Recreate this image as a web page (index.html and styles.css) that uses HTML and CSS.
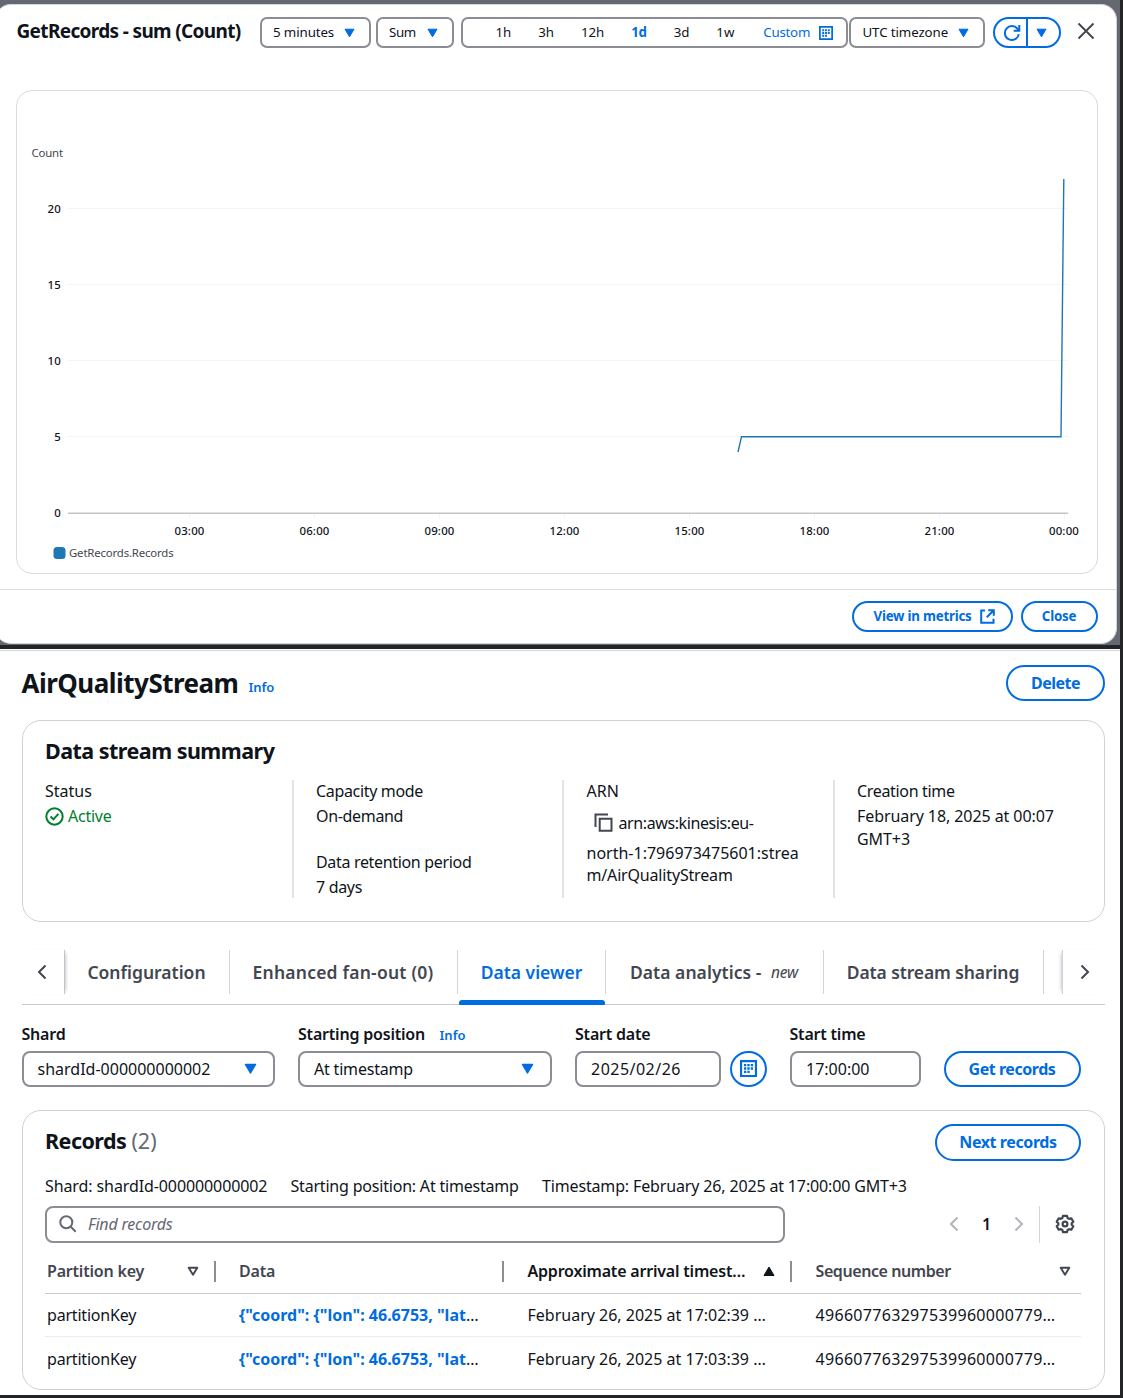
FILE: index.html
```html
<!DOCTYPE html>
<html lang="en">
<head>
<meta charset="utf-8">
<title>AirQualityStream</title>
<link rel="stylesheet" href="styles.css">
</head>
<body>
<svg class="defs" aria-hidden="true">
  <symbol id="caret" viewBox="0 0 11 10"><path d="M1 1.2h9L5.5 8.8z" fill="currentColor" stroke="currentColor" stroke-width="1" stroke-linejoin="round"/></symbol>
  <symbol id="calendar" viewBox="0 0 16 16"><path d="M1 1h14v14H1z" fill="none" stroke="currentColor" stroke-width="2"/><path d="M3.700 3.700h2.200v2.200H3.700zM6.900 3.700h2.200v2.200H6.900zM10.100 3.700h2.200v2.200h-2.200zM3.700 6.900h2.200v2.200H3.700zM6.900 6.900h2.200v2.200H6.900zM10.100 6.900h2.200v2.200h-2.200zM3.700 10.100h2.200v2.200H3.700zM6.900 10.100h2.200v2.200H6.900z" fill="currentColor"/></symbol>
  <symbol id="chevron-left" viewBox="0 0 16 16"><path d="M11.5 1.5 5 8l6.500 6.500" fill="none" stroke="currentColor" stroke-width="2"/></symbol>
  <symbol id="chevron-right" viewBox="0 0 16 16"><path d="M4.500 1.500 11 8l-6.500 6.500" fill="none" stroke="currentColor" stroke-width="2"/></symbol>
  <symbol id="sort" viewBox="0 0 12 11"><path d="M1.700 1.800h8.600L6 8.700z" fill="none" stroke="currentColor" stroke-width="1.900" stroke-linejoin="round"/></symbol>
</svg>

<section class="overlay">
  <div class="modal">
    <header class="modal-header">
      <h2 class="modal-title">GetRecords - sum (Count)</h2>
      <div class="select select-period"><span>5 minutes</span><svg class="caret"><use href="#caret"/></svg></div>
      <div class="select select-stat"><span class="tight">Sum</span><svg class="caret"><use href="#caret"/></svg></div>
      <div class="ranges">
        <span>1h</span><span>3h</span><span>12h</span><span class="range-on">1d</span><span>3d</span><span>1w</span>
        <span class="range-custom">Custom <svg class="range-cal"><use href="#calendar"/></svg></span>
      </div>
      <div class="select select-zone"><span>UTC timezone</span><svg class="caret"><use href="#caret"/></svg></div>
      <div class="split">
        <span class="split-main"><svg width="18" height="18" viewBox="0 0 18 18" fill="none" stroke="currentColor" stroke-width="2"><path d="M15.800 10.200A7 7 0 1 1 14.500 4.800l1.500 1.700"/><path d="M16.300 1v5.700h-5.600"/></svg></span>
        <span class="split-menu"><svg class="caret"><use href="#caret"/></svg></span>
      </div>
      <svg class="dismiss" width="18" height="18" viewBox="0 0 18 18"><path d="M1.500 1.500l15 15M16.500 1.500l-15 15" stroke="#424650" stroke-width="1.900"/></svg>
    </header>

    <div class="chart-card">
      <svg class="chart" width="1079" height="481" viewBox="17 91 1079 481">
        <text class="axis-title" x="31.500" y="157">Count</text>
        <g class="grid">
          <path d="M68 208.500H1068M68 284.500H1068M68 360.500H1068M68 436.500H1068"/>
          <path d="M189.500 514v5M314.500 514v5M439.500 514v5M564.500 514v5M689.500 514v5M814.500 514v5M939.500 514v5M1064.500 514v5"/>
        </g>
        <path class="axis" d="M68 513.200H1068"/>
        <g class="y-labels">
          <text x="61" y="213">20</text><text x="61" y="289">15</text><text x="61" y="365">10</text><text x="61" y="441">5</text><text x="61" y="517">0</text>
        </g>
        <g class="x-labels">
          <text x="189.500" y="535">03:00</text><text x="314.500" y="535">06:00</text><text x="439.500" y="535">09:00</text><text x="564.500" y="535">12:00</text><text x="689.500" y="535">15:00</text><text x="814.500" y="535">18:00</text><text x="939.500" y="535">21:00</text><text x="1064" y="535">00:00</text>
        </g>
        <path class="series" d="M738 452l3.500-15.300H1061L1063.800 179"/>
        <rect x="53.500" y="547" width="12" height="12" rx="3.500" fill="#1f77b4"/>
        <text class="legend" x="69" y="557">GetRecords.Records</text>
      </svg>
    </div>

    <footer class="modal-footer">
      <span class="button button-small button-metrics">View in metrics
        <svg width="15" height="15" viewBox="0 0 15 15" fill="none" stroke="currentColor" stroke-width="2"><path d="M5 1.500H1.200v12.300h12.300V9.800"/><path d="M8.200 1.200h5.600v5.500M13.500 1.500 6.800 8.200"/></svg>
      </span>
      <span class="button button-small button-close">Close</span>
    </footer>
  </div>
</section>

<main class="page">
  <header class="page-header">
    <h1>AirQualityStream</h1><span class="info">Info</span>
    <span class="button button-delete">Delete</span>
  </header>

  <section class="card summary">
    <h2>Data stream summary</h2>
    <div class="columns">
      <div class="column">
        <div class="label">Status</div>
        <div class="value status"><svg width="19" height="19" viewBox="0 0 19 19" fill="none" stroke="currentColor" stroke-width="2"><circle cx="9.500" cy="9.500" r="8.200"/><path d="M5.500 9.500l2.900 2.900 5-5.600"/></svg>Active</div>
      </div>
      <div class="column">
        <div class="label tight">Capacity mode</div>
        <div class="value tight">On-demand</div>
        <div class="label second tight">Data retention period</div>
        <div class="value tight">7 days</div>
      </div>
      <div class="column">
        <div class="label">ARN</div>
        <div class="value arn-first"><svg width="19" height="20" viewBox="0 0 19 20" fill="none" stroke="#424650" stroke-width="2"><path d="M1.500 14V1.500H14"/><path d="M5.700 5.700h11.800v12H5.700z"/></svg><span>arn:aws:kinesis:eu-</span></div>
        <div class="value">north-1:796973475601:strea<br><span class="arn-last">m/AirQualityStream</span></div>
      </div>
      <div class="column">
        <div class="label tight">Creation time</div>
        <div class="value created">February 18, 2025 at 00:07<br>GMT+3</div>
      </div>
    </div>
  </section>

  <nav class="tabs">
    <span class="tab-arrow tab-prev"><svg width="16" height="16"><use href="#chevron-left"/></svg></span>
    <span class="tab tab-config">Configuration</span>
    <span class="tab tab-fanout">Enhanced fan-out (0)</span>
    <span class="tab tab-viewer">Data viewer</span>
    <span class="tab tab-analytics">Data analytics -&nbsp; <i>new</i></span>
    <span class="tab tab-sharing">Data stream sharing</span>
    <span class="tab-arrow tab-next"><svg width="16" height="16"><use href="#chevron-right"/></svg></span>
  </nav>

  <section class="form">
    <div class="field field-shard"><div class="field-label">Shard</div>
      <div class="input"><span>shardId-000000000002</span><svg class="caret-large"><use href="#caret"/></svg></div></div>
    <div class="field field-position"><div class="field-label">Starting position<span class="info">Info</span></div>
      <div class="input"><span class="at">At timestamp</span><svg class="caret-large"><use href="#caret"/></svg></div></div>
    <div class="field field-date"><div class="field-label">Start date</div>
      <div class="input"><span class="digits">2025/02/26</span></div></div>
    <span class="cal-button"><svg width="17" height="17"><use href="#calendar"/></svg></span>
    <div class="field field-time"><div class="field-label">Start time</div>
      <div class="input"><span class="digits">17:00:00</span></div></div>
    <span class="button button-get">Get records</span>
  </section>

  <section class="card records">
    <header class="records-header">
      <h2>Records <span class="count">(2)</span></h2>
      <span class="button button-next">Next records</span>
    </header>
    <div class="meta"><span class="meta-shard">Shard: shardId-000000000002</span><span class="meta-position">Starting position: At timestamp</span><span class="meta-time">Timestamp: February 26, 2025 at 17:00:00 GMT+3</span></div>
    <div class="tools">
      <div class="search"><svg width="18" height="18" viewBox="0 0 18 18" fill="none" stroke="#656871" stroke-width="2"><circle cx="7.300" cy="7.300" r="6"/><path d="M11.500 11.500l5.200 5.200"/></svg><i>Find records</i></div>
      <div class="pager">
        <svg width="16" height="16"><use href="#chevron-left"/></svg><b>1</b><svg width="16" height="16"><use href="#chevron-right"/></svg>
      </div>
      <div class="settings"><svg width="20" height="20" viewBox="0 0 20 20" fill="none" stroke="#424650" stroke-width="2.200" stroke-linejoin="round"><path d="M8 1.800h4l.6 2.200 1.500.9 2.200-.6 2 3.400-1.600 1.600v1.400l1.600 1.600-2 3.400-2.200-.6-1.500.9-.6 2.200H8L7.400 16l-1.500-.9-2.200.6-2-3.400 1.600-1.600V9.300L1.700 7.700l2-3.400 2.200.6L7.400 4z"/><circle cx="10" cy="10" r="2.400"/></svg></div>
    </div>
    <div class="table">
      <div class="row head">
        <span class="cell th"><span>Partition key</span><svg class="sort"><use href="#sort"/></svg></span>
        <span class="cell th"><span>Data</span></span>
        <span class="cell th th-sorted"><span>Approximate arrival timest…</span><svg class="sort" viewBox="0 0 12 11"><path d="M1 9.500h10L6 1z" fill="currentColor" stroke="currentColor" stroke-linejoin="round"/></svg></span>
        <span class="cell th th-sequence"><span>Sequence number</span><svg class="sort"><use href="#sort"/></svg></span>
      </div>
      <div class="row">
        <span class="cell">partitionKey</span>
        <span class="cell"><b class="link">{"coord": {"lon": 46.6753, "lat</b>…</span>
        <span class="cell">February 26, 2025 at 17:02:39 …</span>
        <span class="cell digits-cell">496607763297539960000779…</span>
      </div>
      <div class="row">
        <span class="cell">partitionKey</span>
        <span class="cell"><b class="link">{"coord": {"lon": 46.6753, "lat</b>…</span>
        <span class="cell">February 26, 2025 at 17:03:39 …</span>
        <span class="cell digits-cell">496607763297539960000779…</span>
      </div>
    </div>
  </section>
</main>
</body>
</html>
```

FILE: styles.css
```css
* { box-sizing: border-box; }
body {
  margin: 0;
  width: 1123px;
  height: 1398px;
  overflow: hidden;
  padding-right: 3px;
  background: #232526;
  color: #0f141a;
  font: 16px/22.5px "Noto Sans", "Open Sans", sans-serif;
}
h1, h2 { margin: 0; font-weight: 700; white-space: nowrap; }
b { font-weight: 600; }
svg { display: block; flex: none; }
.defs { display: none; }
.tight { letter-spacing: -0.33px; }

/* Metric dialog */
.overlay { height: 645px; padding-top: 4px; background: #656871; overflow: hidden; }
.modal {
  height: 640px;
  margin: 0 3px 0 -5px;
  border: 1px solid #d4d5d9;
  border-width: 1px 1px 1px 0;
  border-radius: 16px;
  background: #fff;
  font-size: 13.3px;
}
.modal-header { display: flex; height: 43px; padding: 12px 0 0 21.500px; }
.modal-title { width: 243px; font-size: 19px; line-height: 29px; letter-spacing: -0.65px; }
.select {
  display: flex;
  align-items: center;
  justify-content: space-between;
  height: 31px;
  padding: 0 13px 0 11.500px;
  border: 2px solid #8c8c94;
  border-radius: 7px;
  letter-spacing: -0.1px;
}
.caret { width: 11px; height: 10px; color: #006ce0; }
.select-period { width: 111px; margin-right: 5px; padding-right: 14px; }
.select-stat { width: 78px; margin-right: 7px; padding-right: 14px; }
.select-zone { width: 136px; margin-right: 8px; padding-right: 14px; }
.ranges {
  display: flex;
  align-items: center;
  gap: 27px;
  width: 387px;
  height: 31px;
  margin-right: 1.500px;
  padding-left: 33px;
  border: 2px solid #8c8c94;
  border-radius: 7px;
  letter-spacing: -0.05px;
}
.range-on { color: #006ce0; font-weight: 700; letter-spacing: -0.3px; }
.range-custom { display: flex; align-items: center; gap: 9px; margin-left: 2px; color: #006ce0; letter-spacing: -0.25px; }
.range-cal { width: 14px; height: 14px; }
.split { display: flex; width: 68px; height: 31px; border: 2px solid #006ce0; border-radius: 16px; color: #006ce0; }
.split-main, .split-menu { display: flex; align-items: center; justify-content: center; }
.split-main { width: 33px; padding-left: 2px; border-right: 2px solid #006ce0; }
.split-menu { width: 27px; }
.dismiss { margin: 5px 0 0 15.500px; }
.chart-card {
  width: 1082px;
  height: 484px;
  margin: 42px 0 15px 21px;
  border: 1px solid #d9dbdf;
  border-radius: 16px;
}
.chart text { font-size: 11.4px; fill: #0f141a; }
.chart .axis-title, .chart .legend { fill: #424650; letter-spacing: -0.17px; }
.y-labels { text-anchor: end; }
.y-labels, .x-labels { letter-spacing: 0.18px; font-weight: 500; }
.x-labels { text-anchor: middle; }
.grid { stroke: #f4f4f5; fill: none; }
.axis { stroke: #c4c5c8; stroke-width: 1.6; }
.series { fill: none; stroke: #1f77b4; stroke-width: 1.4; }
.modal-footer { display: flex; justify-content: flex-end; gap: 8px; height: 54px; padding: 11px 18.500px 0 0; border-top: 1px solid #dcdde1; }

.button {
  display: flex;
  align-items: center;
  justify-content: center;
  height: 36.500px;
  border: 2px solid #006ce0;
  border-radius: 19px;
  color: #006ce0;
  font-weight: 700;
  white-space: nowrap;
  letter-spacing: -0.35px;
}
.button-small { height: 31px; letter-spacing: -0.22px; }
.button-metrics { gap: 8px; width: 161px; padding-left: 4px; }
.button-close { width: 77px; }

/* Stream page */
.page { height: 746px; margin-top: 4px; padding: 1px 15px 0 21.500px; background: linear-gradient(#fff 1px, #d5d6d8 1px, #d5d6d8 2px, #fff 2px); }
.page-header { display: flex; align-items: center; height: 66px; }
h1 { font-size: 26px; line-height: 34px; letter-spacing: -0.52px; }
.info { color: #006ce0; font-size: 13px; font-weight: 600; }
.page-header .info { margin: 9px 0 0 10px; }
.button-delete { width: 99px; margin-left: auto; letter-spacing: -0.5px; }
.card { border: 1px solid #d0d1d5; border-radius: 19px; }
.card h2 { font-size: 21.500px; line-height: 28px; letter-spacing: -0.53px; }
.summary { height: 202px; margin-top: 4px; padding: 16px 0 0 22.500px; }
.columns { display: flex; height: 118px; margin-top: 15px; }
.column { width: 270.500px; padding-left: 22.500px; border-left: 2px solid #e2e3e6; white-space: nowrap; }
.column:first-child { width: 246.500px; padding-left: 0; border: 0; }
.label { margin-bottom: 2.500px; }
.second { margin-top: 23px; }
.status { display: flex; align-items: center; gap: 4px; color: #00802f; letter-spacing: -0.25px; }
.arn-first { display: flex; align-items: center; height: 36.500px; padding-left: 7px; letter-spacing: -0.4px; }
.arn-first span { margin-left: 6px; }
.arn-last { letter-spacing: -0.17px; }
.created { letter-spacing: -0.08px; }

.tabs { display: flex; height: 56px; margin-top: 27px; padding-top: 1px; border-bottom: 1px solid #c9cad0; font-size: 17.500px; color: #424650; font-weight: 600; }
.tab { display: flex; align-items: center; justify-content: center; height: 44px; border-right: 1px solid #d4d5d9; white-space: nowrap; }
.tab i { font-size: 15.500px; font-weight: 400; letter-spacing: -0.2px; padding-left: 5px; }
.tab-arrow { display: flex; align-items: center; height: 44px; }
.tab-prev { width: 43px; padding-left: 12px; border-right: 1px solid #c3c4ca; box-shadow: 3px 0 4px -3px #aaacb4; }
.tab-next { width: 43px; margin-left: 18.500px; padding-left: 13.500px; border-left: 1px solid #d2d3d8; box-shadow: -3px 0 4px -3px #aaacb4; }
.tab-config { width: 165px; }
.tab-fanout { width: 228px; letter-spacing: 0.22px; }
.tab-viewer { position: relative; width: 148px; padding-left: 1px; color: #006ce0; }
.tab-viewer::after { content: ""; position: absolute; left: 1px; right: 0; bottom: -11px; height: 5px; border-radius: 3px 3px 1px 1px; background: #006ce0; }
.tab-analytics { width: 218px; letter-spacing: 0.05px; }
.tab-sharing { width: 220px; letter-spacing: -0.1px; }

.form { display: flex; align-items: flex-end; height: 82px; }
.field-label { height: 28px; font-weight: 600; letter-spacing: -0.2px; }
.field-label .info { margin-left: 14.500px; letter-spacing: 0; }
.input { display: flex; align-items: center; justify-content: space-between; height: 36.500px; padding: 0 16px 0 14px; border: 2px solid #8c8c94; border-radius: 8px; }
.caret-large { width: 13px; height: 11.500px; color: #006ce0; }
.at { letter-spacing: -0.19px; }
.field-shard { width: 253.500px; margin-right: 23px; }
.field-position { width: 254px; margin-right: 23px; }
.field-date { width: 146px; margin-right: 9px; }
.field-time { width: 131px; margin-right: 23px; }
.digits { letter-spacing: 0.48px; }
.field-time .digits { letter-spacing: 0; margin-left: 0.500px; }
.cal-button { display: flex; align-items: center; justify-content: center; width: 37px; height: 36.500px; margin-right: 22.500px; border: 2px solid #006ce0; border-radius: 50%; color: #006ce0; }
.button-get { width: 137px; letter-spacing: -0.45px; }

.records { height: 280px; margin-top: 23px; padding: 13.500px 23px 0 22.500px; }
.records-header { display: flex; align-items: center; justify-content: space-between; height: 36px; }
.records-header h2 { margin-top: -3px; }
.count { color: #656871; font-weight: 400; letter-spacing: 0; }
.button-next { width: 146px; letter-spacing: -0.4px; }
.meta { display: flex; margin-top: 14px; white-space: nowrap; }
.meta-shard { width: 245.500px; letter-spacing: -0.1px; }
.meta-position { width: 251.500px; letter-spacing: -0.2px; }
.meta-time { letter-spacing: -0.15px; }
.tools { display: flex; margin-top: 9px; height: 36.500px; }
.search { display: flex; align-items: center; gap: 11px; width: 740px; padding-left: 12px; border: 2px solid #8c8c94; border-radius: 8px; color: #656871; letter-spacing: -0.2px; }
.pager { display: flex; align-items: center; justify-content: space-between; width: 81px; margin: 0 12px 0 161px; color: #b4b4bb; }
.pager b { color: #0f141a; }
.settings { display: flex; align-items: center; padding-left: 15px; border-left: 1px solid #d4d5d9; }
.table { margin-top: 7.500px; }
.row { display: grid; grid-template-columns: 170.500px 288.500px 288px 289px; align-items: center; height: 43.500px; border-bottom: 1px solid #ebebf0; }
.row:last-child { border: 0; }
.cell { padding-left: 23.500px; white-space: nowrap; letter-spacing: 0; }
.cell:first-child { padding-left: 2px; letter-spacing: -0.2px; }
.head { border-color: #c9cad0; }
.th { display: flex; align-items: center; justify-content: space-between; height: 21px; padding-right: 15px; border-right: 2px solid #8c8c94; color: #424650; font-weight: 600; letter-spacing: -0.2px; }
.th-sequence { padding-right: 10.500px; border: 0; letter-spacing: -0.42px; }
.th-sorted { color: #0f141a; }
.sort { width: 12px; height: 11px; }
.link { color: #006ce0; font-weight: 700; }
.digits-cell { letter-spacing: 0.31px; }
```
